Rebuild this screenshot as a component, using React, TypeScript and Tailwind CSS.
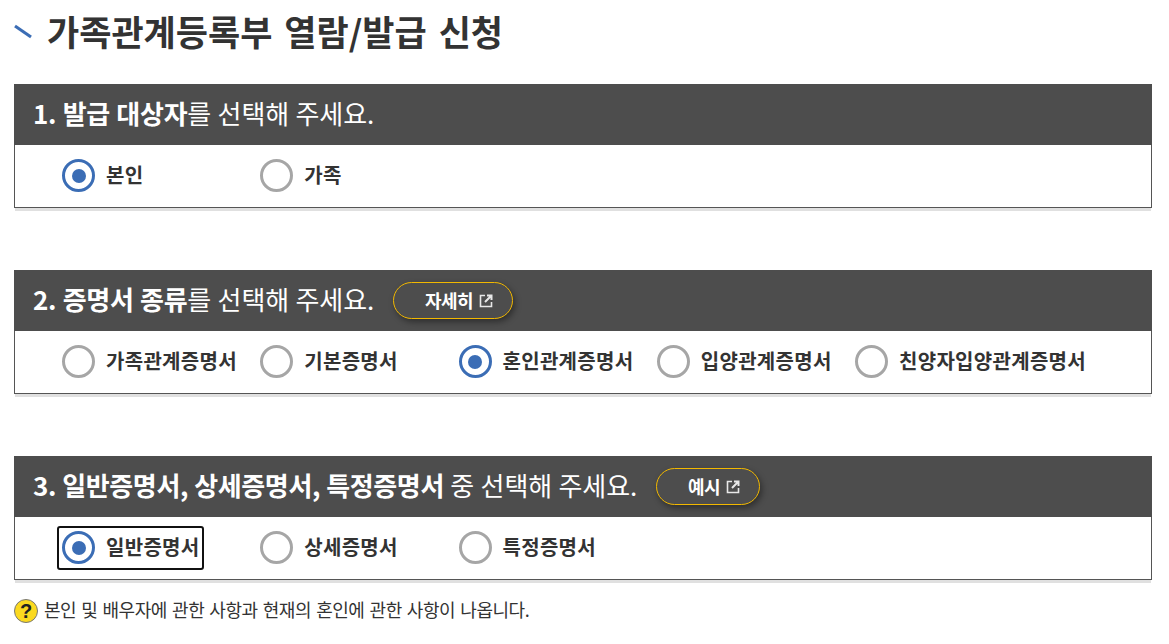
import React from 'react';

const ExternalIcon: React.FC = () => (
  <svg width="14" height="14" viewBox="0 0 14 14" fill="none" stroke="#e8e8e8" className="shrink-0">
    <path d="M6 1.500H1.500v11h11V8" strokeWidth="1.6" />
    <path d="M6 8l6-6M8 1.500h4.500V6" strokeWidth="2" />
  </svg>
);

const Radio: React.FC<{ checked?: boolean }> = ({ checked }) => (
  <span
    className={`flex h-[33px] w-[33px] shrink-0 items-center justify-center rounded-full border-[3px] bg-white ${
      checked ? 'border-[#3b6db5]' : 'border-[#a6a6a6]'
    }`}
  >
    {checked && <span className="h-3.5 w-3.5 rounded-full bg-[#3b6db5]" />}
  </span>
);

type Option = { label: string; checked?: boolean; focus?: boolean };

const OptionItem: React.FC<Option> = ({ label, checked, focus }) => (
  <div className="relative flex h-[33px] items-center gap-[11px]">
    {focus && <span className="absolute -left-[5px] -top-[5px] h-11 w-[147px] rounded-[3px] border-2 border-[#111]" />}
    <Radio checked={checked} />
    <span className="mt-[-2px] whitespace-nowrap text-[20px] font-bold tracking-[0.3px] text-[#333]">{label}</span>
  </div>
);

const Panel: React.FC<{ title: React.ReactNode; button?: { label: string; width: string }; options: Option[] }> = ({
  title,
  button,
  options,
}) => (
  <section className="shadow-[0_4px_0_-1px_#e0e0e0]">
    <div className="flex h-[61px] items-center bg-[#4d4d4d] pl-[19px] text-white">
      <h2 className="mt-[-4px] whitespace-nowrap text-[26px] font-normal tracking-[-0.1px] [word-spacing:0.7px]">{title}</h2>
      {button && (
        <a
          className={`ml-[19px] flex h-[37px] items-center justify-end gap-[6px] rounded-full border border-[#f2b800] bg-[#4d4d4d] pr-[19px] text-[18px] font-bold tracking-[-0.5px] text-white shadow-[2px_3px_6px_rgba(0,0,0,0.4)] ${button.width}`}
        >
          {button.label}
          <ExternalIcon />
        </a>
      )}
    </div>
    <div className="grid h-[63px] grid-cols-[repeat(5,198.25px)] items-center border-x border-b border-x-[#555] border-b-[#555] bg-white pb-px pl-[47px]">
      {options.map((o) => (
        <OptionItem key={o.label} {...o} />
      ))}
    </div>
  </section>
);

const App: React.FC = () => (
  <div className="h-[644px] w-[1169px] overflow-hidden bg-white font-['Noto_Sans_CJK_KR','Noto_Sans',sans-serif] text-[#333]">
    <div className="flex h-[84px] items-start pl-[14px] pt-[5px]">
      <svg width="20" height="16" viewBox="0 0 20 16" className="mt-[19px] shrink-0">
        <path d="M1 2l16 11" stroke="#3b6db5" strokeWidth="3" fill="none" />
      </svg>
      <h1 className="ml-[13px] whitespace-nowrap text-[35px] font-bold leading-[52px] text-[#333] [word-spacing:4px]">
        가족관계등록부 열람/발급 신청
      </h1>
    </div>
    <div className="ml-[14px] flex w-[1138px] flex-col gap-[62px]">
      <Panel
        title={
          <>
            <b className="tracking-[-0.25px]">1. 발급 대상자</b>를 선택해 주세요.
          </>
        }
        options={[{ label: '본인', checked: true }, { label: '가족' }]}
      />
      <Panel
        title={
          <>
            <b className="tracking-[-0.25px]">2. 증명서 종류</b>를 선택해 주세요.
          </>
        }
        button={{ label: '자세히', width: 'w-[120px]' }}
        options={[
          { label: '가족관계증명서' },
          { label: '기본증명서' },
          { label: '혼인관계증명서', checked: true },
          { label: '입양관계증명서' },
          { label: '친양자입양관계증명서' },
        ]}
      />
      <Panel
        title={
          <>
            <b className="tracking-[-0.38px]">3. 일반증명서, 상세증명서, 특정증명서</b> 중 선택해 주세요.
          </>
        }
        button={{ label: '예시', width: 'w-[104px]' }}
        options={[{ label: '일반증명서', checked: true, focus: true }, { label: '상세증명서' }, { label: '특정증명서' }]}
      />
    </div>
    <div className="ml-[14px] mt-[19px] flex items-center gap-[6px]">
      <span className="flex h-6 w-6 items-center justify-center rounded-full border border-[#777] bg-[#fbd91f] font-['Liberation_Sans',sans-serif] text-[20px] font-bold leading-none text-[#222]">
        ?
      </span>
      <p className="mt-[-5px] whitespace-nowrap text-[18px] leading-6 tracking-[-0.45px] text-[#333] [word-spacing:1.5px]">
        본인 및 배우자에 관한 사항과 현재의 혼인에 관한 사항이 나옵니다.
      </p>
    </div>
  </div>
);

export default App;
